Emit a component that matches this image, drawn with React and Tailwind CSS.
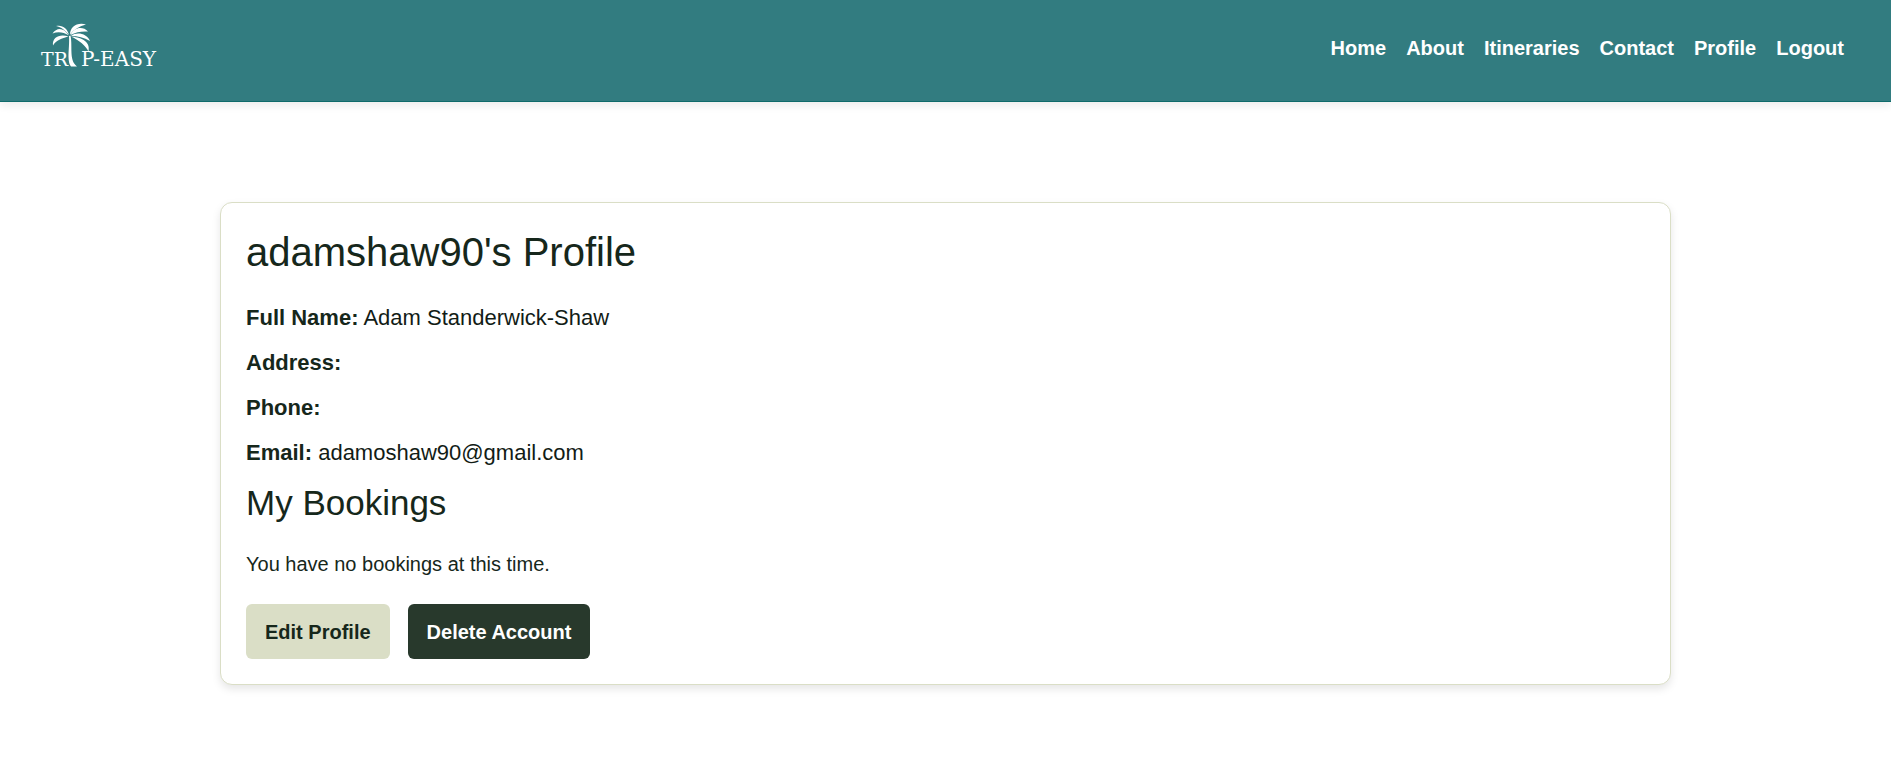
const links = ["Home", "About", "Itineraries", "Contact", "Profile", "Logout"];

const details = [
  ["Full Name", "Adam Standerwick-Shaw"],
  ["Address", ""],
  ["Phone", ""],
  ["Email", "adamoshaw90@gmail.com"],
];

function Logo() {
  return (
    <svg viewBox="0 0 120 56" className="h-14 w-[120px]" fill="#fff" role="img" aria-label="Trip-Easy">
      <g fontFamily="'DejaVu Serif', serif">
        <text x="1" y="46" fontSize="19">TR</text>
        <text x="41" y="46" fontSize="20">P-EASY</text>
      </g>
      <path d="M29 16C29.500 22 28.500 31 28.500 37C28.600 42 29.500 44.500 31 46.500L37 46.500C32.500 43 31.600 38 31.400 31C31.300 25 31.500 20 30.500 15.500Z" />
      <path d="M29 15C27.500 8 22 4.500 16 6C21.500 7 24.500 10 29 15Z" />
      <path d="M28.500 15.500C24 7.500 17 7 12.500 13.500C18 11.500 23.500 12 28.500 15.500Z" />
      <path d="M28.500 16.500C20 13.500 12 17 13 25.500C16.500 20 21.500 18.500 28.500 16.500Z" />
      <path d="M30 14.500C30 7 37 2 46 4.500C39.500 6 34 9.500 30 14.500Z" />
      <path d="M30.500 15C34 7 43 6 48 11.500C42 11 36 12 30.500 15Z" />
      <path d="M31 15.800C37 11.500 47 13.500 50 21C44 17.500 38 16.500 31 15.800Z" />
      <path d="M31 16.500C39 17 51 20.500 48.500 31.500C45.500 25.500 39.500 20.500 31 16.500Z" />
    </svg>
  );
}

export default function App() {
  return (
    <div className="font-['Liberation_Sans',Arial,sans-serif] text-xl leading-[30px] text-[#16271b]">
      <header className="flex items-start justify-between border-b border-[#0f6b6b] bg-[#327c80] px-10 pt-5 pb-[25px] shadow-[0_4px_8px_rgba(0,0,0,0.07)]">
        <a href="#home">
          <Logo />
        </a>
        <nav className="flex gap-5 pt-[13px] pr-[7px] font-bold text-white">
          {links.map((l) => (
            <a key={l} href={`#${l.toLowerCase()}`}>
              {l}
            </a>
          ))}
        </nav>
      </header>
      <main className="px-5 pt-[100px] pb-10">
        <section className="mx-auto max-w-[1451px] rounded-xl border border-[#dadec6] bg-white p-[25px] shadow-[0_4px_8px_rgba(0,0,0,0.1)]">
          <h1 className="mb-[25px] text-[40px] leading-[48px]">adamshaw90's Profile</h1>
          <div className="flex flex-col gap-3 text-[22px] leading-[33px]">
            {details.map(([label, value]) => (
              <p key={label}>
                <strong>{label}:</strong> <span className="text-[#121c16]">{value}</span>
              </p>
            ))}
          </div>
          <h2 className="mt-[13px] mb-[25px] text-[35px] leading-[42px]">My Bookings</h2>
          <p className="mb-[25px]">You have no bookings at this time.</p>
          <div className="flex gap-[18px] font-bold">
            <button className="h-[55px] rounded-md bg-[#dadec6] px-[19px]">Edit Profile</button>
            <button className="h-[55px] rounded-md bg-[#28392c] px-[19px] text-white">Delete Account</button>
          </div>
        </section>
      </main>
    </div>
  );
}
